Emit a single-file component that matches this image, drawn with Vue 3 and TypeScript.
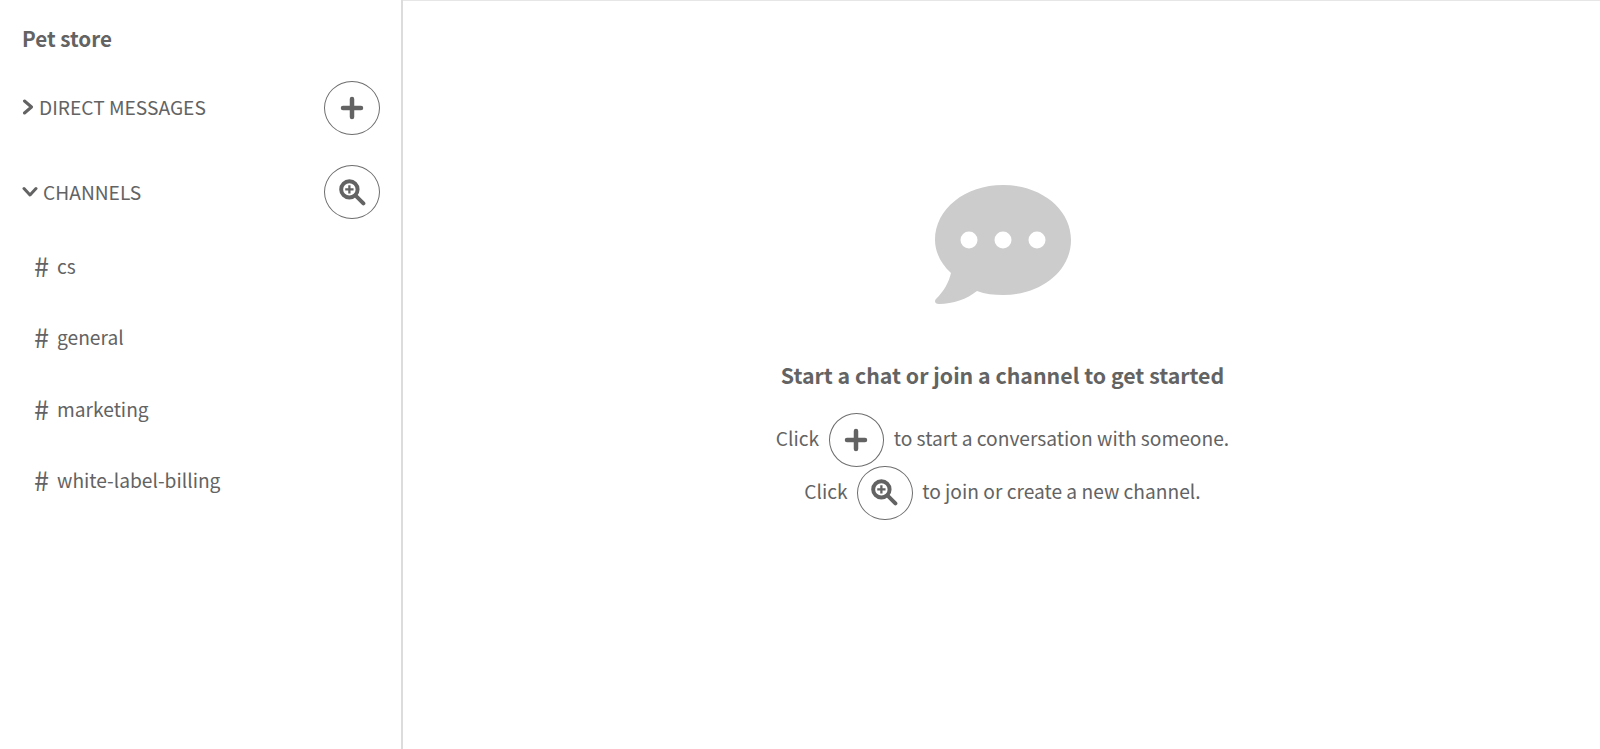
<template>
  <div class="layout">
    <aside class="sidebar">
      <h1 class="team">Pet store</h1>

      <div class="section dm">
        <div class="section-title">
          <svg class="chev-right" viewBox="0 0 12 16"><path d="M2.5 2 L9.5 8 L2.5 14" /></svg>
          <span>DIRECT MESSAGES</span>
        </div>
        <button class="round" aria-label="New message">
          <svg class="plus" viewBox="0 0 24 24"><path d="M12 3 V21 M3 12 H21" /></svg>
        </button>
      </div>

      <div class="section channels">
        <div class="section-title">
          <svg class="chev-down" viewBox="0 0 16 12"><path d="M2 2.5 L8 9 L14 2.5" /></svg>
          <span>CHANNELS</span>
        </div>
        <button class="round" aria-label="Find channel">
          <svg class="zoom" viewBox="0 0 26 26">
            <circle cx="10" cy="10" r="7.9" />
            <path class="handle" d="M16 16 L23.5 23.5" />
            <path class="inner" d="M10 6 V14 M6 10 H14" />
          </svg>
        </button>
      </div>

      <ul class="channel-list">
        <li v-for="c in channels" :key="c" class="channel">
          <span class="hash">#</span>
          <span>{{ c }}</span>
        </li>
      </ul>
    </aside>

    <main class="main">
      <svg class="bubble" viewBox="0 0 136 120">
        <path
          d="M68 0 C106 0 136 24 136 55 C136 86 106 110 68 110 C59 110 50 109 42 106 C32 114 18 119 4 119 C0 119 -1 116 1 114 C9 106 14 97 16 88 C6 79 0 67 0 55 C0 24 30 0 68 0 Z"
        />
        <circle cx="34" cy="55" r="8.5" />
        <circle cx="68" cy="55" r="8.5" />
        <circle cx="102" cy="55" r="8.5" />
      </svg>

      <h2 class="headline">Start a chat or join a channel to get started</h2>

      <div class="hint first">
        <span>Click</span>
        <span class="round">
          <svg class="plus" viewBox="0 0 24 24"><path d="M12 3 V21 M3 12 H21" /></svg>
        </span>
        <span>to start a conversation with someone.</span>
      </div>
      <div class="hint">
        <span>Click</span>
        <span class="round">
          <svg class="zoom" viewBox="0 0 26 26">
            <circle cx="10" cy="10" r="7.9" />
            <path class="handle" d="M16 16 L23.5 23.5" />
            <path class="inner" d="M10 6 V14 M6 10 H14" />
          </svg>
        </span>
        <span>to join or create a new channel.</span>
      </div>
    </main>
  </div>
</template>

<script setup lang="ts">
const channels: string[] = ['cs', 'general', 'marketing', 'white-label-billing']
</script>

<style>
html,
body {
  margin: 0;
  background: #fff;
}
</style>

<style scoped>
.layout {
  display: flex;
  height: 749px;
  overflow: hidden;
  color: #636363;
  font-family: 'Noto Sans CJK JP', 'Source Sans Pro', 'Open Sans', sans-serif;
  font-size: 19.2px;
  line-height: 28px;
}
.sidebar {
  box-sizing: border-box;
  width: 403px;
  flex: none;
  padding: 24px 21px 0 22px;
  border-right: 2px solid #dcdcdc;
}
.team {
  margin: 0;
  font-size: 20.6px;
  font-weight: 700;
  line-height: 28px;
}
.section {
  display: flex;
  align-items: center;
  justify-content: space-between;
}
.dm {
  margin-top: 29px;
}
.channels {
  margin-top: 30px;
}
.section-title {
  display: flex;
  align-items: center;
  gap: 5px;
}
.dm .section-title {
  padding-bottom: 2px;
}
.chev-right {
  width: 12px;
  height: 16px;
}
.chev-down {
  width: 16px;
  height: 12px;
}
.chev-right path,
.chev-down path {
  fill: none;
  stroke: #636363;
  stroke-width: 3;
  stroke-linecap: round;
  stroke-linejoin: round;
}
.round {
  box-sizing: border-box;
  display: inline-flex;
  align-items: center;
  justify-content: center;
  width: 56px;
  height: 54px;
  flex: none;
  padding: 0;
  background: #fff;
  border: 1.5px solid #6e6e6e;
  border-radius: 50%;
}
.plus {
  width: 24px;
  height: 24px;
}
.plus path {
  fill: none;
  stroke: #636363;
  stroke-width: 4.5;
  stroke-linecap: round;
}
.zoom {
  width: 27px;
  height: 27px;
}
.zoom circle {
  fill: none;
  stroke: #636363;
  stroke-width: 3.8;
}
.zoom .handle {
  fill: none;
  stroke: #636363;
  stroke-width: 3.8;
  stroke-linecap: round;
}
.zoom .inner {
  fill: none;
  stroke: #636363;
  stroke-width: 2.2;
}
.channel-list {
  list-style: none;
  margin: 11px 0 0;
  padding: 0 0 0 12px;
}
.channel {
  display: flex;
  align-items: center;
  gap: 7px;
  height: 71.5px;
}
.hash {
  width: 16px;
  font-size: 27px;
}
.main {
  flex: 1;
  display: flex;
  flex-direction: column;
  align-items: center;
  border-top: 1px solid #e6e6e6;
  padding-top: 184px;
}
.bubble {
  width: 136px;
  height: 120px;
  margin-left: 2px;
  fill: #cccccc;
}
.bubble circle {
  fill: #fff;
}
.headline {
  margin: 56px 0 0 2px;
  font-size: 21.3px;
  font-weight: 700;
  line-height: 28px;
}
.hint {
  display: flex;
  align-items: center;
  gap: 9.5px;
  height: 53px;
  margin-left: 2px;
}
.hint .round {
  position: relative;
  top: 2px;
  width: 55.5px;
}
.first {
  margin-top: 22px;
}
</style>
